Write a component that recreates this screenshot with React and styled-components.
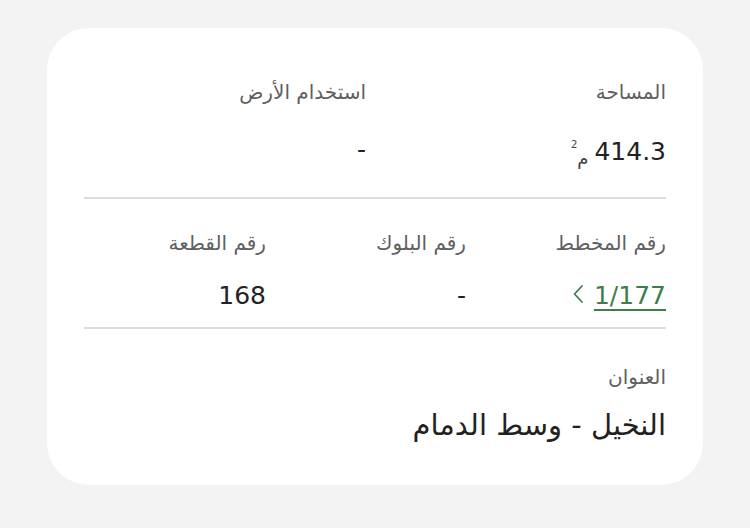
import React from "react";
import styled, { createGlobalStyle } from "styled-components";

const Global = createGlobalStyle`
  html, body { margin: 0; padding: 0; background: #f3f3f3; }
  body { font-family: "DejaVu Sans", sans-serif; }
`;

const Page = styled.div`
  width: 750px;
  height: 528px;
  box-sizing: border-box;
  padding: 28px 47px 43px 47px;
  background: #f3f3f3;
`;

const Card = styled.div`
  direction: rtl;
  background: #ffffff;
  border-radius: 42px;
  height: 100%;
  box-sizing: border-box;
  padding: 50px 37px 0 37px;
  display: flex;
  flex-direction: column;
`;

const Row = styled.div`
  display: grid;
  grid-template-columns: repeat(${(p) => p.cols}, ${(p) => p.colWidth}px);
  padding-bottom: ${(p) => p.pb || 0}px;
  border-bottom: ${(p) => (p.divider ? "2px solid #dcdcdc" : "none")};
  margin-bottom: ${(p) => p.mb || 0}px;
`;

const Field = styled.div`
  display: flex;
  flex-direction: column;
  gap: ${(p) => p.gap}px;
`;

const Label = styled.div`
  font-family: "DejaVu Sans", sans-serif;
  font-size: 20px;
  color: #606060;
  line-height: 28px;
`;

const Value = styled.div`
  font-family: "DejaVu Sans", sans-serif;
  font-size: 25px;
  color: #222222;
  line-height: 32px;
  display: flex;
  align-items: center;
  gap: 6px;
`;

const Unit = styled.span`
  font-size: 18px;
  color: #444;
  position: relative;
  top: 5px;
  sup { font-size: 10px; position: relative; top: -10px; }
`;

const Link = styled.a`
  color: #3f7d4d;
  text-decoration: underline;
  text-decoration-thickness: 2px;
  text-underline-offset: 5px;
  direction: ltr;
`;

const Chevron = styled.svg`
  width: 12px;
  height: 20px;
  margin-right: 4px;
  margin-top: -4px;
`;

const Address = styled.div`
  font-family: "DejaVu Sans", sans-serif;
  font-size: 29px;
  color: #222222;
  line-height: 36px;
`;

export default function App() {
  return (
    <>
      <Global />
      <Page>
        <Card>
          <Row cols={2} colWidth={300} divider pb={27} mb={30}>
            <Field gap={28}>
              <Label>المساحة</Label>
              <Value>
                <span>414.3</span>
                <Unit>م<sup>2</sup></Unit>
              </Value>
            </Field>
            <Field gap={28}>
              <Label>استخدام الأرض</Label>
              <Value>-</Value>
            </Field>
          </Row>
          <Row cols={3} colWidth={200} divider pb={15} mb={34}>
            <Field gap={23}>
              <Label>رقم المخطط</Label>
              <Value>
                <Link>1/177</Link>
                <Chevron viewBox="0 0 12 20">
                  <path d="M10 2 L2.5 10 L10 18" fill="none" stroke="#3f7d4d" strokeWidth="1.8" strokeLinecap="round" strokeLinejoin="round" />
                </Chevron>
              </Value>
            </Field>
            <Field gap={23}>
              <Label>رقم البلوك</Label>
              <Value>-</Value>
            </Field>
            <Field gap={23}>
              <Label>رقم القطعة</Label>
              <Value>168</Value>
            </Field>
          </Row>
          <Field gap={16}>
            <Label>العنوان</Label>
            <Address>النخيل - وسط الدمام</Address>
          </Field>
        </Card>
      </Page>
    </>
  );
}
